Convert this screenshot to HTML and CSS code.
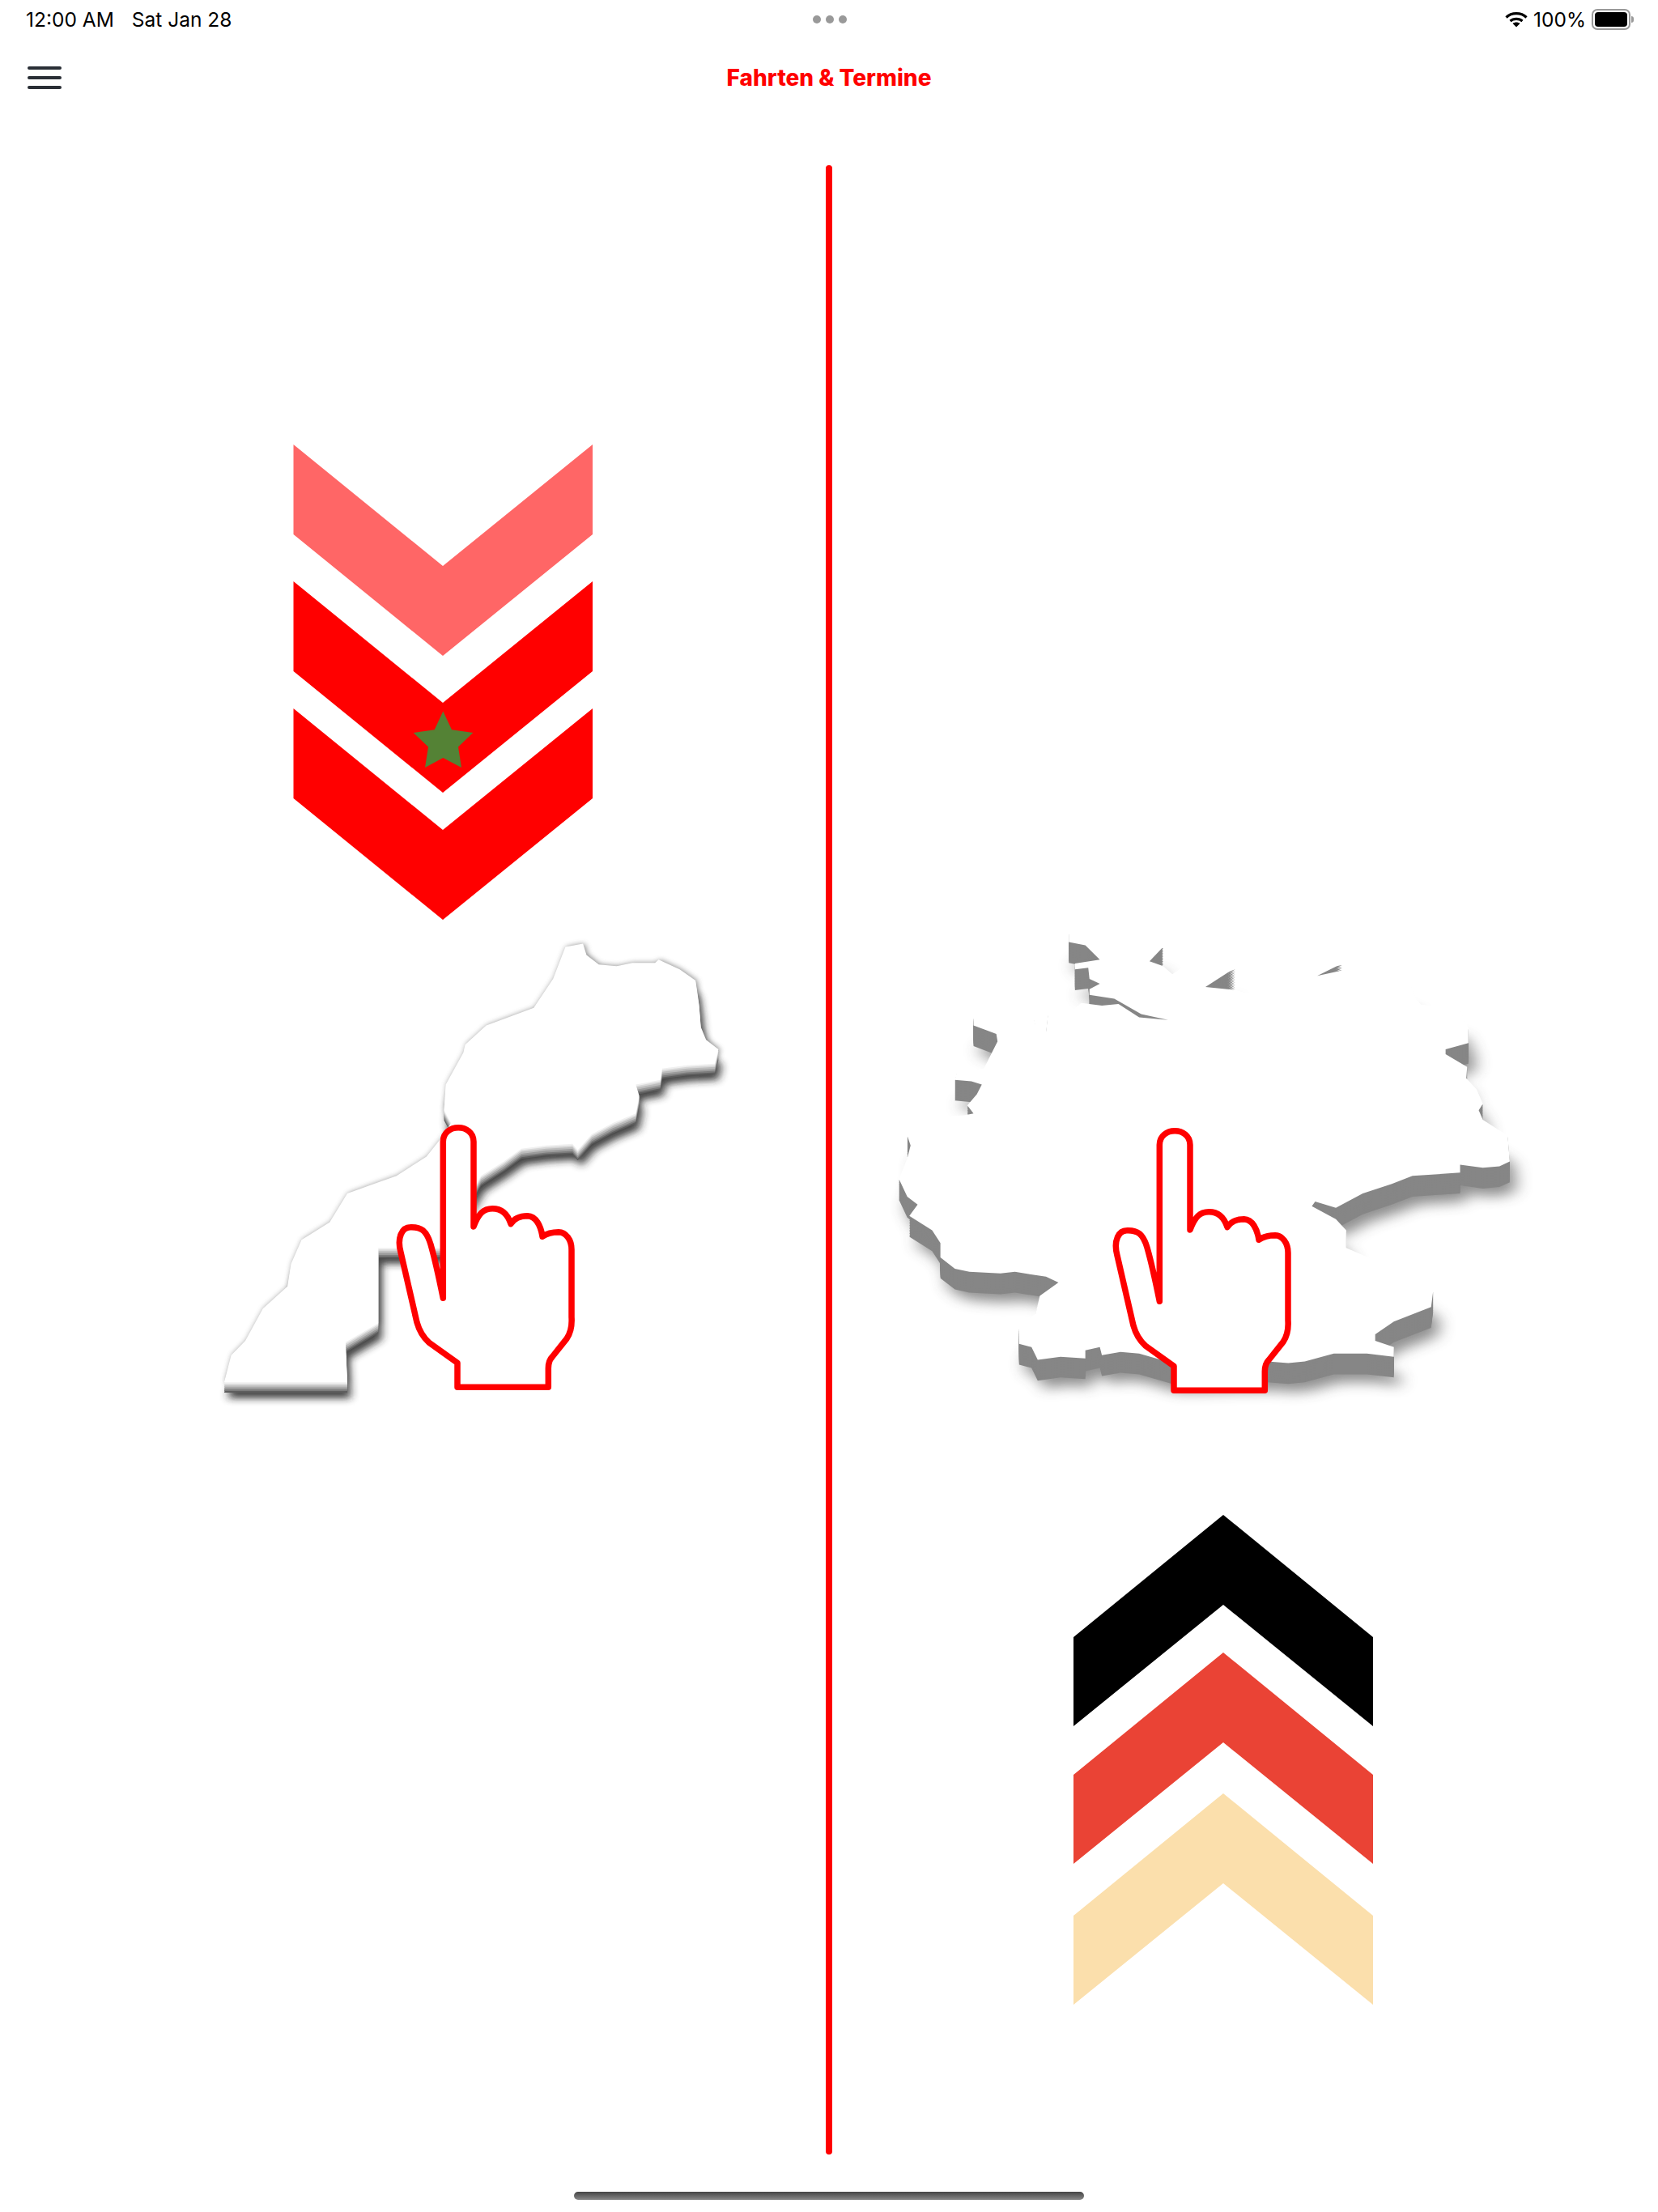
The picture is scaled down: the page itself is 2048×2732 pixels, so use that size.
FILE: index.html
```html
<!DOCTYPE html>
<html>
<head>
<title>Fahrten &amp; Termine</title>
<link rel="stylesheet" href="styles.css">
</head>
<body>

<div class="screen">
  <!-- Status bar -->
  <div class="status-bar">
    <div class="status-left">
      <span>12:00 AM</span>
      <span>Sat Jan 28</span>
    </div>
    <div class="status-dots"><i></i><i></i><i></i></div>
    <div class="status-right">
      <svg class="wifi" viewBox="0 0 28 20">
        <path d="M1.5 7.5C8 1 20 1 26.5 7.5" fill="none" stroke="#000" stroke-width="3.2"/>
        <path d="M6.5 12C10.5 8.5 17.5 8.5 21.5 12" fill="none" stroke="#000" stroke-width="3.2"/>
        <path d="M14 19.5l-4.5-4.5c2.5-2 6.5-2 9 0z" fill="#000"/>
      </svg>
      <span>100%</span>
      <div class="battery">
        <div class="battery-body"><div class="battery-level"></div></div>
        <div class="battery-tip"></div>
      </div>
    </div>
  </div>

  <!-- Navigation bar -->
  <div class="nav-bar">
    <div class="menu-icon"><i></i><i></i><i></i></div>
    <h1 class="nav-title">Fahrten &amp; Termine</h1>
    <div></div>
  </div>

  <!-- Two directions, split by the red line -->
  <div class="stage">
    <svg class="panel" viewBox="0 204 1020 2457">
      <defs>
        <filter id="blurWide" x="-20%" y="-20%" width="140%" height="140%"><feGaussianBlur stdDeviation="20"/></filter>
        <filter id="blurSoft" x="-20%" y="-20%" width="140%" height="140%"><feGaussianBlur stdDeviation="12"/></filter>
        <filter id="blurThin" x="-10%" y="-10%" width="120%" height="120%"><feGaussianBlur stdDeviation="8"/></filter>
        <polygon id="moroccoShape" points="1055,100 1105,90 1115,125 1150,155 1200,160 1245,150 1310,150 1320,140 1380,170 1425,205 1435,280 1440,350 1455,390 1490,420 1480,465 1400,470 1330,480 1325,515 1255,530 1265,565 1255,620 1190,650 1130,685 1090,735 1075,715 1000,720 930,730 880,770 815,815 700,1040 523,1040 523,1275 430,1335 435,1460 85,1460 105,1375 145,1330 195,1230 265,1160 275,1090 305,1015 385,960 435,870 510,840 575,815 660,755 700,700 730,650 710,610 715,530 765,430 770,405 830,345 965,290 1020,200"/>
        <polygon id="germanyShape" points="450,55 520,55 600,68 678,100 645,145 678,160 700,185 740,150 800,190 852,165 780,225 855,235 880,245 920,245 945,205 1010,190 1050,165 1110,152 1050,190 1140,165 1200,195 1275,215 1290,265 1300,280 1395,295 1415,355 1415,400 1360,420 1360,435 1412,475 1410,510 1435,545 1450,590 1440,610 1450,640 1510,690 1515,770 1490,785 1450,790 1395,780 1395,805 1280,815 1230,840 1160,870 1095,915 1045,895 1037,910 1095,950 1120,985 1120,1040 1200,1085 1270,1120 1330,1175 1325,1225 1235,1270 1190,1310 1190,1330 1235,1350 1235,1380 1170,1370 1090,1370 1020,1395 980,1400 930,1395 700,1400 620,1370 575,1365 530,1375 525,1350 490,1360 490,1385 430,1380 375,1390 360,1350 330,1340 330,1290 370,1245 380,1190 425,1148 395,1130 320,1115 285,1120 210,1115 175,1105 140,1070 140,1025 120,985 65,940 85,905 60,880 40,825 60,760 68,720 60,690 110,635 200,625 220,620 205,595 228,560 240,530 215,520 175,515 180,490 245,480 278,395 275,372 220,345 220,320 320,295 365,320 370,345 395,365 400,310 430,335 450,310 480,275 530,283 570,278 620,320 690,328 625,310 560,262 500,250 500,232 525,215 500,200 497,165 465,170 465,152 525,140 490,95 450,85"/>
        <path id="hand" d="M547.3 1603.3V1410C547.3 1387 585 1387 585 1410V1515C591 1499 597 1492.7 608.3 1492.7C620 1492.7 627 1499 631 1511.7C635 1505 642 1501.7 651.7 1501.7C662 1502 668 1514 670 1527.3C676 1523 683 1521.7 690 1521.7C699 1522 706 1531 706 1543.3V1626.7C706.7 1637 705 1646 700 1653.3L682 1676C678 1680 677.3 1684 677.3 1690V1713.3H565V1683.3L530 1658.3C523 1652 518 1644 515 1633.3L495 1546.7C490 1528 497 1515.7 506.7 1515.7C520 1515 527 1520 532 1537C538 1558 543 1582 547.3 1603.3Z"/>
      </defs>

      <!-- Down chevrons -->
      <polygon class="chevron-pink" points="362.5,549 547,699 732,549 732,660 547,810 362.5,660"/>
      <polygon class="chevron-red" points="362.5,718 547,868 732,718 732,829 547,979 362.5,829"/>
      <polygon class="chevron-red" points="362.5,875 547,1025 732,875 732,986 547,1136 362.5,986"/>
      <polygon class="star" points="547.3,878.4 558,901.3 584.3,904.9 566,922.6 570,948 547.3,936 525,948 529,922.6 510.7,904.9 536.7,901.3"/>

      <!-- Morocco -->
      <g transform="translate(240 1130) scale(.4345 .3954)">
        <use href="#moroccoShape" class="shade-soft" transform="translate(10 50)" filter="url(#blurSoft)"/>
        <use href="#moroccoShape" class="shade-halo" transform="translate(4 0)" filter="url(#blurThin)"/>
        <use href="#moroccoShape" class="band-6" transform="translate(0 32)"/>
        <use href="#moroccoShape" class="band-5" transform="translate(0 27)"/>
        <use href="#moroccoShape" class="band-4" transform="translate(0 22)"/>
        <use href="#moroccoShape" class="band-3" transform="translate(0 16)"/>
        <use href="#moroccoShape" class="band-2" transform="translate(0 10)"/>
        <use href="#moroccoShape" class="band-1" transform="translate(0 5)"/>
        <use href="#moroccoShape" class="land"/>
      </g>
      <use href="#hand" class="hand"/>
    </svg>

    <div class="divider"></div>

    <svg class="panel" viewBox="1028 204 1020 2457">
      <!-- Germany -->
      <g transform="translate(1090 1130) scale(.5115 .3954)">
        <use href="#germanyShape" class="shade-wide" transform="translate(16 90)" filter="url(#blurWide)"/>
        <use href="#germanyShape" class="wall" transform="translate(0 65)"/>
        <use href="#germanyShape" class="wall" transform="translate(0 60)"/>
        <use href="#germanyShape" class="wall" transform="translate(0 55)"/>
        <use href="#germanyShape" class="wall" transform="translate(0 50)"/>
        <use href="#germanyShape" class="wall" transform="translate(0 45)"/>
        <use href="#germanyShape" class="wall" transform="translate(0 40)"/>
        <use href="#germanyShape" class="wall" transform="translate(0 35)"/>
        <use href="#germanyShape" class="wall" transform="translate(0 30)"/>
        <use href="#germanyShape" class="wall" transform="translate(0 25)"/>
        <use href="#germanyShape" class="wall" transform="translate(0 20)"/>
        <use href="#germanyShape" class="wall" transform="translate(0 15)"/>
        <use href="#germanyShape" class="wall" transform="translate(0 10)"/>
        <use href="#germanyShape" class="wall" transform="translate(0 5)"/>
        <use href="#germanyShape" class="land"/>
      </g>
      <use href="#hand" class="hand" transform="translate(885 4)"/>

      <!-- Up chevrons -->
      <polygon class="chevron-black" points="1326,2022 1511,1871 1696,2022 1696,2132 1511,1982 1326,2132"/>
      <polygon class="chevron-orange" points="1326,2192 1511,2041 1696,2192 1696,2302 1511,2152 1326,2302"/>
      <polygon class="chevron-sand" points="1326,2366 1511,2215 1696,2366 1696,2476 1511,2326 1326,2476"/>
    </svg>
  </div>

  <!-- Home indicator -->
  <div class="home-indicator"></div>
</div>

</body>
</html>
```

FILE: styles.css
```css
/* Page */
body {
  margin: 0;
  background: #fff;
  font-family: Inter, "Liberation Sans", sans-serif;
  color: #000;
}

.screen {
  display: flex;
  flex-direction: column;
  width: 2048px;
  height: 2732px;
  overflow: hidden;
}

/* Status bar */
.status-bar {
  display: grid;
  grid-template-columns: 1fr auto 1fr;
  align-items: center;
  height: 48px;
  padding: 0 30px 0 32px;
  font-size: 24.5px;
}

.status-left {
  display: flex;
  gap: 22px;
}

.status-dots {
  display: flex;
  gap: 6px;
}

.status-dots i {
  width: 10px;
  height: 10px;
  border-radius: 50%;
  background: #999;
}

.status-right {
  display: flex;
  justify-content: flex-end;
  align-items: center;
  gap: 7px;
}

.wifi {
  width: 28px;
  height: 20px;
}

.battery {
  display: flex;
  align-items: center;
}

.battery-body {
  width: 40px;
  height: 18px;
  padding: 2px;
  border: 2px solid #999;
  border-radius: 7px;
}

.battery-level {
  height: 100%;
  background: #000;
  border-radius: 4px;
}

.battery-tip {
  width: 3px;
  height: 8px;
  margin-left: 1px;
  background: #999;
  border-radius: 0 3px 3px 0;
}

/* Navigation bar */
.nav-bar {
  display: grid;
  grid-template-columns: 1fr auto 1fr;
  align-items: center;
  height: 96px;
  padding-left: 34px;
}

.menu-icon {
  display: flex;
  flex-direction: column;
  gap: 8px;
  width: 42px;
}

.menu-icon i {
  height: 4px;
  border-radius: 2px;
  background: #2a2f36;
}

.nav-title {
  margin: 0 0 0 -34px;
  font-size: 28px;
  font-weight: 800;
  color: #f00;
}

/* Stage with the two halves */
.stage {
  display: grid;
  grid-template-columns: 1fr 8px 1fr;
  flex: 1;
  padding-top: 60px;
}

.panel {
  display: block;
  width: 1020px;
  height: 2457px;
  overflow: visible;
}

.divider {
  background: #f00;
  border-radius: 4px;
}

/* Chevrons */
.chevron-pink { fill: #ff6666; }
.chevron-red { fill: #ff0000; }
.chevron-black { fill: #000; }
.chevron-orange { fill: #ea4335; }
.chevron-sand { fill: #fbdfac; }
.star { fill: #548235; }

/* Maps */
.land { fill: #fff; }
.wall { fill: #868686; }
.shade-wide { fill: #444; opacity: 0.6; }
.shade-soft { fill: #222; opacity: 0.85; }
.shade-halo { fill: #555; opacity: 0.7; }
.band-1 { fill: #f0f0f0; }
.band-2 { fill: #d8d8d8; }
.band-3 { fill: #bcbcbc; }
.band-4 { fill: #9c9c9c; }
.band-5 { fill: #7c7c7c; }
.band-6 { fill: #5e5e5e; }

/* Pointing hand */
.hand {
  fill: #fff;
  stroke: #f00;
  stroke-width: 7.5;
  stroke-linejoin: round;
  stroke-linecap: round;
}

/* Home indicator */
.home-indicator {
  flex: none;
  width: 630px;
  height: 10px;
  margin: 46px auto 15px;
  border-radius: 5px;
  background: linear-gradient(#444, #888);
}
```
